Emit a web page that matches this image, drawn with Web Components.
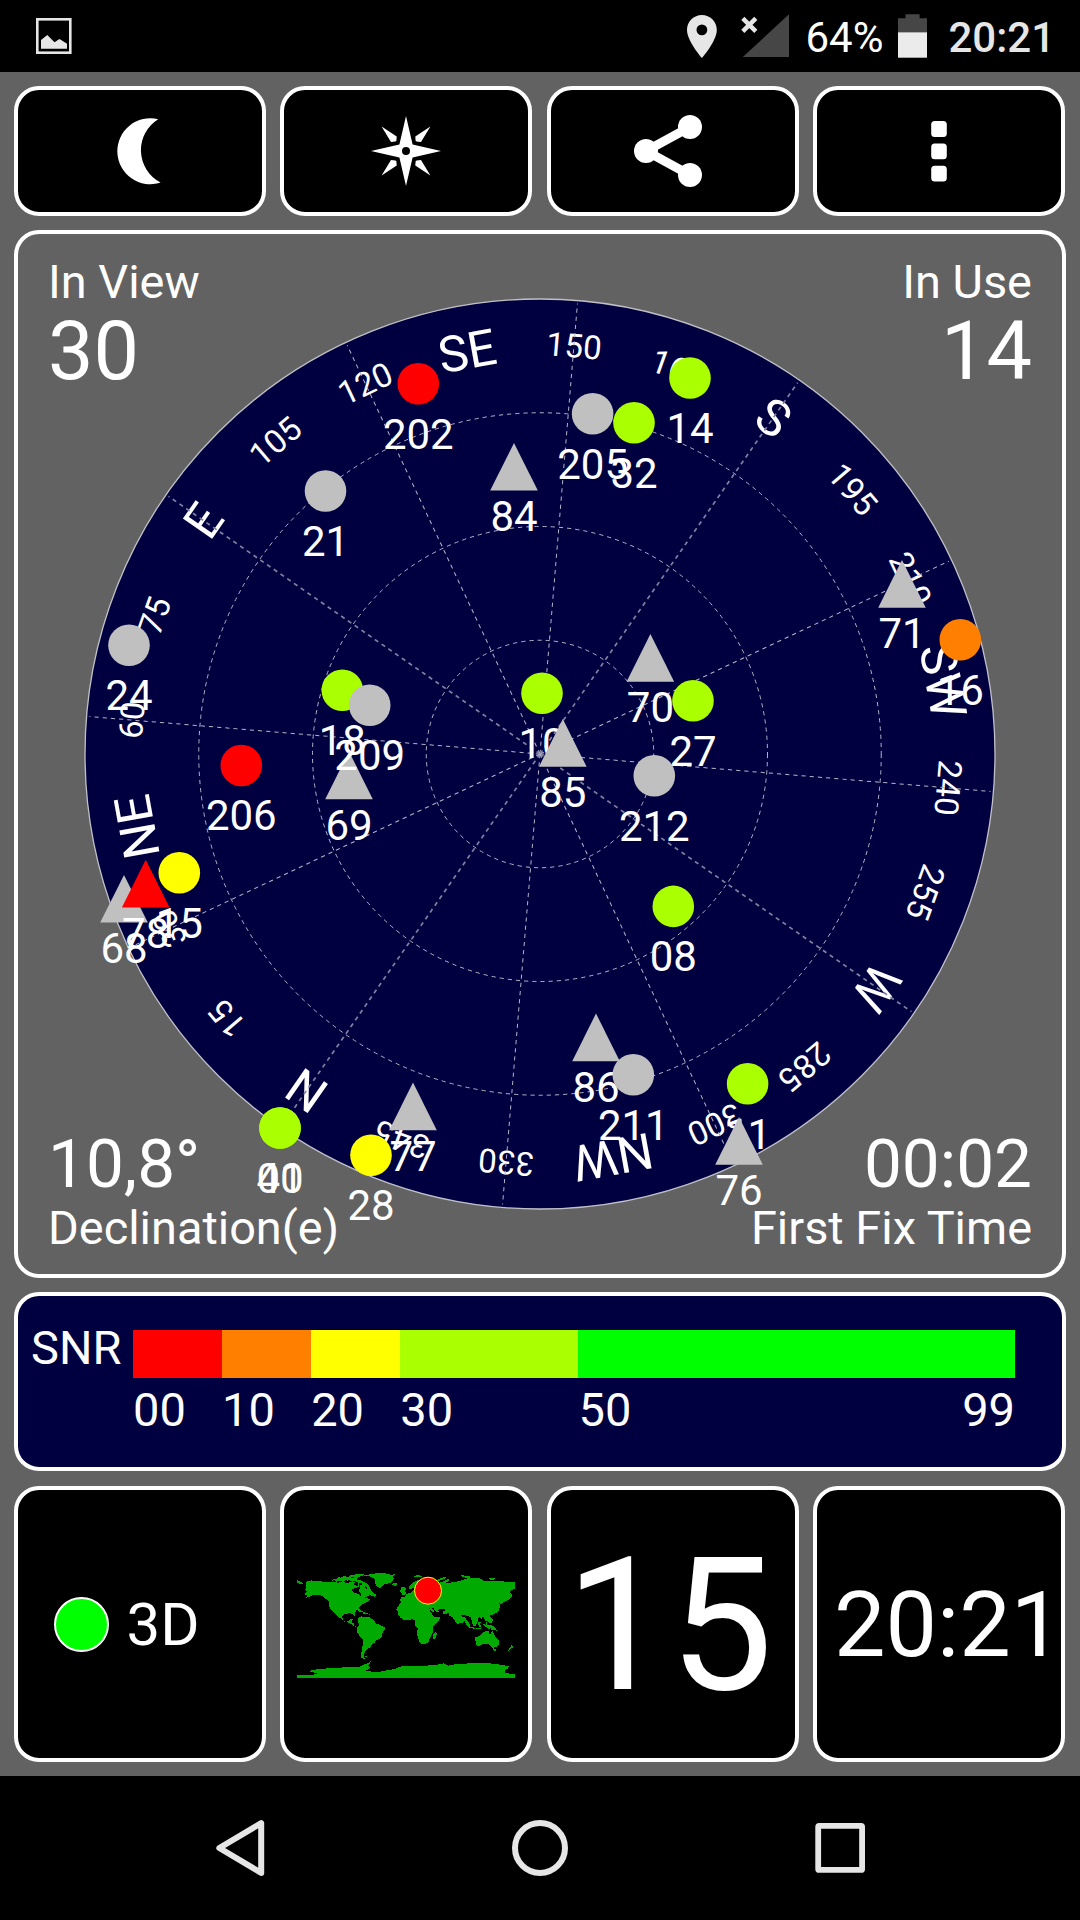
<!DOCTYPE html>
<html lang="en">
<head>
<meta charset="utf-8">
<title>GPS Status</title>
<style>
html,body{margin:0;padding:0;background:#626262}
body{width:1080px;height:1920px;overflow:hidden;font-family:Roboto,"Noto Sans",sans-serif;color:#fff}
</style>
</head>
<body>
<gps-app></gps-app>
<script>
const define = (name, css, html) => customElements.define(name, class extends HTMLElement {
  connectedCallback() {
    if (this.shadowRoot) return;
    const root = this.attachShadow({ mode: 'open' });
    root.innerHTML = `<style>*{box-sizing:border-box}svg{display:block}${css}</style>` + (typeof html === 'function' ? html(this) : html);
  }
});

define('status-bar', `
:host{display:flex;height:72px;background:#000;align-items:center;box-sizing:border-box;padding:0 25px 0 36px;font-size:42px;line-height:46px}
.gap{flex:1}
.pct{margin-left:16.5px;margin-top:3px}
.bat{margin-left:15px}
.time{font-weight:500;color:#e6e6e6;margin-left:21px;margin-top:3px}
.loc{margin-right:24px}`, `
<svg width="36" height="72" viewBox="36 0 36 72"><rect x="37.3" y="19.3" width="33" height="33.4" fill="none" stroke="#e6e6e6" stroke-width="2.6"/><path d="M41 48.8V40l6.3-5 7.2 7.3 5-3.2 7.5 4.6v5.1z" fill="#e6e6e6"/></svg>
<span class="gap"></span>
<svg class="loc" width="30" height="72" viewBox="686.7 0 30 72"><path fill="#e6e6e6" fill-rule="evenodd" d="M701.6 15c-8.2 0-14.9 6.6-14.9 14.9 0 11.1 14.9 28.1 14.9 28.1s14.9-17 14.9-28.1c0-8.3-6.7-14.9-14.9-14.9zm0 20.3a5.4 5.4 0 1 1 0-10.8 5.4 5.4 0 0 1 0 10.8z"/></svg>
<svg width="48" height="72" viewBox="740.8 0 48 72"><path d="M742.6 57 788.8 14.3V57z" fill="#464646"/><path d="M742.6 18.4l13 13m0-13l-13 13" stroke="#e6e6e6" stroke-width="4.4"/></svg>
<span class="pct">64%</span>
<svg class="bat" width="29" height="72" viewBox="898.9 0 29 72"><path d="M898.9 18.2h7.5V14.2h14.1v4h7.4v14.2h-29z" fill="#464646"/><path d="M898.9 32.3h29v25.4h-29z" fill="#ebebeb"/></svg>
<span class="time">20:21</span>`);

/* Rounded outlined card used for every block of the app */
define('ui-tile', `
:host{display:flex;align-items:center;justify-content:center;box-sizing:border-box;border:4px solid #fff;border-radius:25px;background:#000;overflow:hidden}`, `<slot></slot>`);

const icons = {
  moon: '<path d="M158.2 119.2A33 33 0 1 0 160.6 182.6A36.5 36.5 0 0 1 158.2 119.2Z" transform="translate(-140 -151)"/>',
  compass: '<path fill-rule="evenodd" d="M0-35 6.6-6.6 35 0 6.6 6.6 0 35-6.6 6.6-35 0-6.6-6.6zM0-4a4 4 0 1 0 0 8a4 4 0 0 0 0-8z"/><g><path d="M-24.4-24.4-9.3-14.6-9.6-10.2-10.6-9.5-15-9z"/><path d="M24.4-24.4 9.3-14.6 9.6-10.2 10.6-9.5 15-9z"/><path d="M-24.4 24.4-9.3 14.6-9.6 10.2-10.6 9.5-15 9z"/><path d="M24.4 24.4 9.3 14.6 9.6 10.2 10.6 9.5 15 9z"/></g>',
  share: '<path d="M17-24-27 0 17 24" fill="none" stroke="#fff" stroke-width="9"/><circle cx="17" cy="-24" r="12"/><circle cx="-27" cy="0" r="12"/><circle cx="17" cy="24" r="12"/>',
  more: '<rect x="-7.8" y="-30" width="15.6" height="16" rx="3.5"/><rect x="-7.8" y="-7.4" width="15.6" height="15.6" rx="3.5"/><rect x="-7.8" y="14.8" width="15.6" height="15.6" rx="3.5"/>'
};
define('tool-icon', `:host{display:block}`, el =>
  `<svg width="80" height="80" viewBox="-40 -40 80 80" fill="#fff">${icons[el.getAttribute('name')]}</svg>`);

/* Sky plot. Each satellite: id, x, y, shape (c circle / t triangle), colour */
const L = '#af0', G = '#c0c0c0', R = '#f00', Y = '#ff0', O = '#ff8000';
const sats = [
  ['01',280,1128,'c',L],['08',673.3,906.4,'c',L],['10',542,693.2,'c',L],['11',747.6,1083.8,'c',L],
  ['14',690,378,'c',L],['15',179.3,872.8,'c',Y],['16',960.3,639.7,'c',O],['18',342.3,690.3,'c',L],
  ['21',325.5,491,'c',G],['24',129,645.3,'c',G],['70',650.4,657.5,'t',G],['27',693,700.7,'c',L],['28',371,1155.3,'c',Y],
  ['40',280,1128,'c',L],['68',124,898.4,'t',G],['69',349,775,'t',G],['71',902,583.5,'t',G],
  ['76',739,1140.6,'t',G],['77',413,1106,'t',G],['78',145.7,883.3,'t',R],['84',514,466.4,'t',G],
  ['85',562.8,742.5,'t',G],['86',596,1037,'t',G],['202',418.3,383.7,'c',R],['205',592.6,413.7,'c',G],['32',634,422.8,'c',L],
  ['206',241.3,765.5,'c',R],['209',369.7,705.3,'c',G],['211',633.3,1074.8,'c',G],['212',654.3,775.8,'c',G]
];
const cx = 540, cy = 754, radius = 455, heading = 214.75;
const names = { 0:'N', 45:'NE', 90:'E', 135:'SE', 180:'S', 225:'SW', 270:'W', 315:'NW' };
function plot() {
  let s = `<circle cx="${cx}" cy="${cy}" r="${radius}" fill="#000040" stroke="#c0c0c8" stroke-width="1.3"/>`;
  for (let az = 0; az < 360; az += 15) {
    const big = az in names;
    s += `<text transform="rotate(${az + heading} ${cx} ${cy})" x="${cx}" y="${cy - (big ? 392 : 398)}" font-size="${big ? 50 : 33}">${names[az] || az}</text>`;
  }
  for (const k of [.25, .5, .75])
    s += `<circle cx="${cx}" cy="${cy}" r="${radius * k}" fill="none" class="dash"/>`;
  for (let az = 0; az < 360; az += 30)
    s += `<path d="M${cx} ${cy}V${cy - radius + 3}" transform="rotate(${az + heading} ${cx} ${cy})" class="dash${az % 90 ? '' : ' main'}"/>`;
  for (const [id, x, y, shape, col] of sats) {
    s += shape === 'c' ? `<circle cx="${x}" cy="${y}" r="20.8" fill="${col}"/>`
      : `<path d="M${x} ${y - 23.5}l23.8 47.7h-47.6z" fill="${col}"/>`;
    s += `<text x="${x}" y="${y + 64.8}" font-size="42">${id}</text>`;
  }
  return s;
}
define('sky-plot', `
:host{display:grid;box-sizing:border-box;height:1048px;border:4px solid #fff;border-radius:25px;background:#626262}
.sky,.corners{grid-area:1/1}
.sky text{fill:#fff;text-anchor:middle}
.dash{stroke:#b4b4c8;stroke-width:1;stroke-dasharray:4.2 4}
.main{stroke:#8080a0;stroke-width:1.7}
.corners{display:flex;flex-direction:column;justify-content:space-between;padding:20px 30px 18px}
.row{display:flex;justify-content:space-between;height:139.4px}
.row.b{height:126.8px}
.cell{display:flex;flex-direction:column}
.r{text-align:right}
.cap{font-size:46.9px;line-height:56px}
.num{font-size:81px;line-height:83.4px}
.b .num{font-size:67.5px;line-height:70.8px}`, () => `
<svg class="sky" width="1044" height="1040" viewBox="18 234 1044 1040">${plot()}</svg>
<div class="corners">
<div class="row"><div class="cell"><span class="cap">In View</span><span class="num">30</span></div><div class="cell r"><span class="cap">In Use</span><span class="num">14</span></div></div>
<div class="row b"><div class="cell"><span class="num">10,8°</span><span class="cap">Declination(e)</span></div><div class="cell r"><span class="num">00:02</span><span class="cap">First Fix Time</span></div></div>
</div>`);

define('snr-scale', `
:host{display:grid;grid-template-columns:102px 882px;grid-template-rows:48px 50px;row-gap:7px;box-sizing:border-box;height:179px;border:4px solid #fff;border-radius:25px;background:#000040;padding:34px 0 0 13px;font-size:47px;line-height:50px}
.t{line-height:36px}
.bar,.ticks{display:flex}
.bar i,.ticks span{flex:10 1 0}
.ticks{grid-column:2}
.bar .w20,.ticks .w20{flex-grow:20}
.bar .w49,.ticks .w49{flex-grow:49}
.w49{display:flex;justify-content:space-between}
b{font-weight:400}`, `
<div class="t">SNR</div>
<div class="bar"><i style="background:#f00"></i><i style="background:#ff8000"></i><i style="background:#ff0"></i><i class="w20" style="background:#af0"></i><i class="w49" style="background:#0f0"></i></div>
<div class="ticks"><span>00</span><span>10</span><span>20</span><span class="w20">30</span><span class="w49"><b>50</b><b>99</b></span></div>`);

define('fix-state', `
:host{display:flex;align-items:center;gap:17.5px;width:100%;padding-left:36px;box-sizing:border-box;font-size:60px;line-height:64px}
i{width:55px;height:55px;border-radius:50%;border:2px solid #fff;background:#0f0}
span{padding-top:2px}`, `<i></i><span>3D</span>`);

define('world-map', `:host{display:block;padding-top:3px}`, `
<svg width="218" height="105" viewBox="51 70 654 315"><g fill="#0a0" shape-rendering="crispEdges">
<path d="M51 90h4v4l8 2 4 4h3v4h-8l-5-3h-6z"/>
<path d="M80 95l14-3 16 3 30 1 24 0 8 3 16-2 14 3 15-4 8 3-5 8 14 1-1-5 6-6-2 14-14 5-9 5 7 7 13 5 8 6 2-8-8-6 3-8 0-11 15 3 4 10 8-7 6 6 5 9 12 9-4 7-8-5-9-1-14 6 17 6-6 6-16 8-9 7-3 6-8 6-4 8 1 9-4 1-4-8-11-1-13 2-7 6 1 12 7 5 11-1 4-6 9-1-4 10 8 3 0 7 8 5 9 0 3 3-8 0-14-7-12-9-16-4-13-11-15-12-14-15-4-10-1-15-8-5-12-10-15-3-10 0-8 5-17 5 7-6-9-4 2-5 7-4-7-4z"/>
<path d="M155 93l7-6 7 1 5-6 9 2 8-6 10 4 9-2 1 7-9 1 3 5-8-1-6 5-10-4-11 3-7-4zM202 88l9-5 9 3 8-7 10 2-8 8 9 2 10 5 10 4 9 9 3 9-9-3-7-7-10 0 2-8-12-1-8-5-10 2zM208 78l18-4 19-1 8 2-9 5-18 2-14 0z"/>
<path d="M249 77l15-2 16-3 25-2 16 2 12 3 14-1-7 6 1 8-4 8-10 5-12 2-9 6-6 7-9-5-6-10 1-9-6-7-10-5-13-2zM336 102l9-2 9 3-6 5-11-1z"/>
<path d="M223 176l11 1 11 6 7 5-10 0-9-6-10-3zM250 188l11 1 3 4-14 0zM267 194h3v3h-3zM276 131l6 2-2 6-6-4z"/>
<path d="M235 206l8-6 13 2 10 0 12 7 8 7 1 6 14 4 13 7 1 7-7 8-2 11-6 8-11 4-6 9-9 5 0 7-9 3-3 5-6 5-2 5-3 6 1 7 5 5-6 1-7-5 0-14 2-11 3-18-1-13-9-8-7-12 0-12 4-7zM255 320h5v3h-5z"/>
<path d="M361 154l1-11 13 0 2-7 8-5 10-3 6-8 0-6-12 5-3-8 9-7 6-7 15-6 13 5-1 8 20 4 20-5 15-5 22-10 4 4-14 8 8 1 15-4 19-2 15-6 16-4 25-1 19 8-6 2 22 0 28 0 20 2 29 0 11 6 22-2 21 1 19 1V108l-10 2-10 0-11 7-15 9-10 6 4-11 5-9-12 5-18 2-13 7 7 8 1 8-11 9-8 4-8 2-2 5-5 1-5-4 3 10-4 13-8 9-9 2 1 5-8-2-2 5 8 9-1 7-8 5-6-8-5-2 3 12 9 14-4 0-8-12-2-15-5-9-9-2-13 11-3 16-3 3-6-10-5-17-10-4-8-4-12 0 4 6 7 0 7 6-4 7-11 6-13 3-5-6-10-15-9-4-3-8-10 3-7-2 0-8 14-1-13-5-9 0-5 3 1 8-8-2-7-10-6-2 8 10-4 4-6-5-5-8-8 2-7 4-4 7-9 0-6-3z"/>
<path d="M357 123l6-1-1-8 8-3 2 9 6 10-3 5-9 0-1-6zM370 112l5 0 4 10-5 1z"/>
<path d="M400 80l11-3 18 1-7 4-14 1zM470 95l4-6 10-5 15-2-7 6-12 5zM541 75l13 3 16 2 0 4-14 0-13-5zM625 86l20 0 6 3-20 1z"/>
<path d="M348 181l8-14 8-11 14-2 15 0 4 7 12 3 12-1 15 0 8 6 7 16 9 15 7 3 14-3-2 8-12 16-9 9 1 14-5 11-5 8-4 11-9 6-12 1-5-7-7-20 0-11 1-11-8-8 1-14-9-4-15 3-11-1-10-7-6-9 0-8zM465 246l4 1 1 7-5 14-7 1 0-11z"/>
<path d="M668 118l4-2 3 1-1 5-6 4zM658 127l6-3 1 4-6 5zM651 134l4-2-2 5-3 2zM638 139l-3 11-4 8-12 3-3-4 15-5 4-12zM611 151l5 7-4 4-3-7zM597 174l3 5-3 2z"/>
<path d="M551 205l8 5 10 13 3 9 12 2 0 3-17-2-9-12zM577 220l13-14 4 4-2 10-6 9-8-2zM597 188l6 6 4 12-3 3-6-9zM594 218l9-1-4 6 4 7-3 3-6-8zM588 236h15v3h-15zM608 224l7-2 3 7 14-3 12 6 5 7 4 5-10-3-8 1-4-7-12-2-8-5z"/>
<path d="M585 264l12-5 12-11 12-4 5 1 0 7 7 2 2-11 5 5 5 12 8 7 4 7 0 9-8 10-12 1-8-8-8-4-13 2-12 5-8-2-1-10zM640 296l8 2-1 6-6-1zM694 286l3 3 4-1-3 6-5 1zM691 293l3 3-7 8-6 1z"/>
<path d="M51 375H102L112 371 98 367 84 364 106 360 128 357 168 355 205 352 238 352 248 346 262 341 272 335 270 343 262 348 270 352 268 358 254 362 280 367 300 366 320 362 345 358 358 351 388 348 440 348 478 344 492 341 506 348 530 343 590 340 630 341 662 345 686 350 684 356 676 362 672 368 690 372H705V384H51z"/></g>
<circle cx="444" cy="123" r="40.5" fill="red" stroke="#ff0" stroke-width="3"/></svg>`);

define('big-text', `:host{display:block;font-size:var(--size);line-height:1;padding:var(--pad,0);white-space:nowrap}`, `<slot></slot>`);

define('nav-bar', `:host{display:flex;height:144px;background:#000;align-items:center;justify-content:space-between;padding:0 212px;box-sizing:border-box}`, `
<svg width="56" height="64" viewBox="212 1816 56 64"><path d="M261.2 1823.1V1872.9L219.3 1848z" fill="none" stroke="#e6e6e6" stroke-width="6" stroke-linejoin="round"/></svg>
<svg width="64" height="64" viewBox="508 1816 64 64"><circle cx="540" cy="1848" r="25" fill="none" stroke="#e6e6e6" stroke-width="6"/></svg>
<svg width="56" height="64" viewBox="812 1816 56 64"><rect x="818.2" y="1825.9" width="43.9" height="44" rx="1" fill="none" stroke="#e6e6e6" stroke-width="5.8" stroke-linejoin="round"/></svg>`);

define('gps-app', `
:host{display:flex;flex-direction:column;width:1080px;height:1920px;background:#626262}
main{flex:1;display:flex;flex-direction:column;gap:14px;padding:14px}
.row{display:grid;grid-template-columns:repeat(4,252px);gap:14.4px}
.tools{height:130px}
.cards{height:276px;margin-top:1px}`, `
<status-bar></status-bar>
<main>
<div class="row tools"><ui-tile><tool-icon name="moon"></tool-icon></ui-tile><ui-tile><tool-icon name="compass"></tool-icon></ui-tile><ui-tile><tool-icon name="share"></tool-icon></ui-tile><ui-tile><tool-icon name="more"></tool-icon></ui-tile></div>
<sky-plot></sky-plot>
<snr-scale></snr-scale>
<div class="row cards"><ui-tile><fix-state></fix-state></ui-tile><ui-tile><world-map></world-map></ui-tile><ui-tile><big-text style="--size:185px;--pad:2px 7px 0 0">15</big-text></ui-tile><ui-tile><big-text style="--size:91.7px;--pad:2px 0 0 18px">20:21</big-text></ui-tile></div>
</main>
<nav-bar></nav-bar>`);
</script>
</body>
</html>
